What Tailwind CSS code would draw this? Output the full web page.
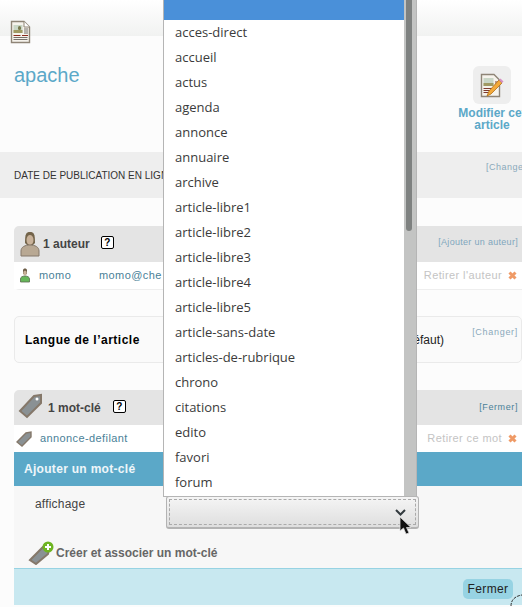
<!DOCTYPE html>
<html lang="en">
<head>
    <meta charset="UTF-8">
    <title>apache</title>
    <script src="https://cdn.jsdelivr.net/npm/@tailwindcss/browser@4"></script>
</head>
<body class="relative w-[522px] h-[607px] overflow-hidden bg-[#fcfcfc] font-['Liberation_Sans',sans-serif]">

    <!-- Top strip -->
    <div class="relative h-9 bg-gradient-to-b from-white to-[#f1f2f1]">
        <svg class="absolute left-[10px] top-[20px]" width="21" height="24" viewBox="0 0 21 24">
            <path d="M1.5 1.5H14L19.5 7V22.5H1.5Z" fill="#f6f3ec" stroke="#8f8577" stroke-width="1.4"/>
            <path d="M14 1.5V7H19.5" fill="#fff" stroke="#8f8577"/>
            <rect x="3.5" y="5" width="9" height="8" fill="#c9d6c6"/>
            <rect x="3.5" y="10" width="9" height="3" fill="#a09a63"/>
            <rect x="8" y="6" width="3" height="4" rx="1.5" fill="#77784c"/>
            <path d="M14 9h4M14 11h4M14 13h4" stroke="#77706a"/>
            <path d="M3.5 15.500h7M12 15.500h6" stroke="#8c2a1c"/>
            <path d="M3.500 17.500h14M3.500 19.500h14" stroke="#77706a"/>
        </svg>
    </div>

    <!-- Title -->
    <div class="h-[116px] flex justify-between">
        <h1 class="pl-[14px] pt-[25px] text-[20px] leading-[28px] text-[#5ba8c8]">apache</h1>
        <div class="w-[70px] mr-[-5px] pt-[30px] flex flex-col items-center shrink-0">
            <div class="w-[38px] h-[38px] rounded-[6px] bg-[#eeeeee] flex items-center justify-center">
                <svg width="24" height="25" viewBox="0 0 24 25">
                    <path d="M1.500 1.500H14L19.500 7V23.500H1.500Z" fill="#f6f3ec" stroke="#8f8577" stroke-width="1.400"/>
                    <rect x="3.500" y="5" width="10" height="8" fill="#c9d6c6"/>
                    <rect x="3.500" y="10" width="10" height="3" fill="#a09a63"/>
                    <path d="M15 9h3M15 11h3M3.500 15.500h10M3.500 17.500h7M3.500 19.500h5" stroke="#7d3a2e"/>
                    <path d="M7 23 9 18 19 7l3 3-11 11Z" fill="#f3a93a" stroke="#b0701a" stroke-width=".8"/>
                    <path d="M19 7l1.500-1.500 3 3L22 10Z" fill="#d68fc4"/>
                </svg>
            </div>
            <a class="mt-[3px] text-center text-[12px] leading-[12px] font-bold text-[#5ba8c8] whitespace-nowrap">Modifier cet<br>article</a>
        </div>
    </div>

    <!-- Publication date -->
    <div class="h-[46px] bg-[#eeeeee] flex justify-between overflow-hidden">
        <span class="pl-[14px] pt-[18px] text-[10px] leading-[12px] text-[#333333] whitespace-nowrap">DATE DE PUBLICATION EN LIGNE</span>
        <a class="pt-[10px] pl-[20px] w-[56px] shrink-0 text-[9px] leading-[11px] tracking-[0.5px] text-[#8aa9bb] whitespace-nowrap overflow-hidden">[Changer]</a>
    </div>

    <!-- Authors -->
    <section class="mt-[28px] ml-[14px] h-[64px] border-b-2 border-[#eeeeee] rounded-bl-[5px]">
        <div class="h-[36px] bg-[#e4e4e4] rounded-tl-[5px] flex items-center justify-between">
            <div class="flex items-center">
                <svg class="ml-[6px]" width="20" height="26" viewBox="0 0 20 26">
                    <path d="M5 12C5 3 6 1 10 1s5 2 5 11l-2 2H7Z" fill="#73644a"/>
                    <ellipse cx="10" cy="9" rx="3.500" ry="5" fill="#c9b29a"/>
                    <path d="M1 25v-5c0-4 4-6 9-6s9 2 9 6v5Z" fill="#b8a893" stroke="#85786a"/>
                </svg>
                <span class="ml-[3px] text-[12px] font-bold text-[#444444]">1 auteur</span>
                <span class="ml-[11px] w-[13px] h-[13px] mb-[3px] border border-black rounded-[2px] bg-white text-[10px] leading-[11px] font-bold text-center text-black">?</span>
            </div>
            <a class="mr-[4px] mb-[3px] text-[9px] tracking-[0.3px] text-[#7fa6bd]">[Ajouter un auteur]</a>
        </div>
        <div class="h-[27px] bg-white flex items-center text-[11px] tracking-[0.4px]">
            <svg class="ml-[6px]" width="10" height="15" viewBox="0 0 10 15">
                <path d="M3 2.500C3 1 4 .5 5 .5s2 .5 2 2V6H3Z" fill="#6b5b45"/>
                <ellipse cx="5" cy="5" rx="1.800" ry="2.500" fill="#c9b29a"/>
                <path d="M.5 14v-3c0-2 2-3 4.500-3s4.500 1 4.500 3v3Z" fill="#66b75a" stroke="#5a6b4e" stroke-width=".8"/>
            </svg>
            <a class="ml-[9px] w-[60px] text-[#4a8198]">momo</a>
            <a class="text-[#4a8198] whitespace-nowrap">momo@che</a>
            <span class="ml-auto text-[#c4c4c4] whitespace-nowrap">Retirer l'auteur</span>
            <svg class="ml-[6px] mr-[5px]" width="9" height="9" viewBox="0 0 9 9"><path d="M1.500 1.500 7.500 7.500M7.500 1.500 1.500 7.500" stroke="#ef9a66" stroke-width="3"/></svg>
        </div>
    </section>

    <!-- Language -->
    <section class="relative mt-[26px] ml-[14px] h-[47px] border border-[#eaeaea] rounded-[5px] bg-[#fafafa] flex items-center justify-between">
        <strong class="ml-[10px] text-[12px] tracking-[0.5px] text-black">Langue de l’article</strong>
        <span class="mr-[77px] text-[12px] text-[#222222]">français (par défaut)</span>
        <a class="absolute right-[3px] top-[9px] text-[9px] tracking-[0.7px] text-[#8aa9bb]">[Changer]</a>
    </section>

    <!-- Keywords -->
    <section class="mt-[27px] ml-[14px] h-[216px]">
        <div class="h-[35px] bg-[#e4e4e4] rounded-tl-[5px] flex items-center justify-between">
            <div class="flex items-center">
                <svg class="ml-[4px] mb-[4px]" width="25" height="26" viewBox="0 0 25 26">
                    <path d="M2 18 16 3l7-1 0 8L9 24Z" fill="#8a9194" stroke="#85786a" stroke-width="2"/>
                    <circle cx="19" cy="6" r="1.500" fill="#fff"/>
                </svg>
                <span class="ml-[5px] text-[12px] font-bold text-[#444444]">1 mot-clé</span>
                <span class="ml-[12px] w-[13px] h-[13px] mb-[3px] border border-black rounded-[2px] bg-white text-[10px] leading-[11px] font-bold text-center text-black">?</span>
            </div>
            <a class="mr-[4px] text-[9px] tracking-[0.6px] text-[#4a8198]">[Fermer]</a>
        </div>
        <div class="h-[27px] bg-white flex items-center text-[11px] tracking-[0.4px]">
            <svg class="ml-[2px]" width="16" height="16" viewBox="0 0 16 16">
                <path d="M1 11 10 2l5-1v5l-9 9Z" fill="#8a9194" stroke="#85786a" stroke-width="1.400"/>
            </svg>
            <a class="ml-[8px] text-[#4a8198]">annonce-defilant</a>
            <span class="ml-auto text-[#c4c4c4] whitespace-nowrap">Retirer ce mot</span>
            <svg class="ml-[6px] mr-[5px]" width="9" height="9" viewBox="0 0 9 9"><path d="M1.500 1.500 7.500 7.500M7.500 1.500 1.500 7.500" stroke="#ef9a66" stroke-width="3"/></svg>
        </div>
        <div class="h-[34px] bg-[#5ba8c8] pl-[10px] pt-[10px] text-[12px] leading-[14px] font-bold tracking-[0.3px] text-white/90">Ajouter un mot-clé</div>
        <div class="h-[83px] bg-[#f7f7f7] border-b border-[#97d3e3]">
            <div class="h-[52px] flex items-start">
                <label class="ml-[21px] mt-[11px] w-[131px] text-[12px] leading-[14px] tracking-[0.2px] text-[#444444]">affichage</label>
                <div class="mt-[10px] w-[253px] h-[33px] p-[2px] rounded-[3px] border border-[#b3b3b3] border-b-2 bg-gradient-to-b from-[#f5f5f5] to-[#dedede]">
                    <div class="relative h-full border border-dashed border-[#aaaaaa]">
                        <svg class="absolute right-[9px] top-[9px]" width="11" height="7" viewBox="0 0 11 7"><path d="M1 1 5.500 5.500 10 1" fill="none" stroke="#333b3f" stroke-width="2"/></svg>
                    </div>
                </div>
            </div>
            <div class="flex items-center h-[30px]">
                <svg class="ml-[14px]" width="26" height="24" viewBox="0 0 26 24">
                    <path d="M2 19 15 6l6 2-1 5L8 23Z" fill="#8a9194" stroke="#85786a" stroke-width="2"/>
                    <circle cx="20" cy="6" r="5.500" fill="#6fb522"/>
                    <path d="M20 3v6M17 6h6" stroke="#fff" stroke-width="2"/>
                </svg>
                <span class="ml-[2px] text-[12px] font-bold text-[#666666]">Créer et associer un mot-clé</span>
            </div>
        </div>
        <div class="h-[36px] bg-[#c8e8f0] flex justify-end items-start">
            <button class="mt-[10px] mr-[9px] w-[50px] h-[20px] rounded-[5px] bg-[#97d3e3] text-[12px] tracking-[0.4px] text-[#222222]">Fermer</button>
        </div>
    </section>

    <!-- Open select list -->
    <div class="absolute left-[163px] top-0 w-[254px] h-[497px] border-x border-b border-[#b5b5b5] bg-white flex font-['Open_Sans',sans-serif] text-[13px] text-[#3b3b3b]">
        <ul class="flex-1 min-w-0">
            <li class="h-[20px] bg-[#4a90d9]"></li>
            <li class="h-[25px] leading-[25px] pl-[11px]">acces-direct</li>
            <li class="h-[25px] leading-[25px] pl-[11px]">accueil</li>
            <li class="h-[25px] leading-[25px] pl-[11px]">actus</li>
            <li class="h-[25px] leading-[25px] pl-[11px]">agenda</li>
            <li class="h-[25px] leading-[25px] pl-[11px]">annonce</li>
            <li class="h-[25px] leading-[25px] pl-[11px]">annuaire</li>
            <li class="h-[25px] leading-[25px] pl-[11px]">archive</li>
            <li class="h-[25px] leading-[25px] pl-[11px]">article-libre1</li>
            <li class="h-[25px] leading-[25px] pl-[11px]">article-libre2</li>
            <li class="h-[25px] leading-[25px] pl-[11px]">article-libre3</li>
            <li class="h-[25px] leading-[25px] pl-[11px]">article-libre4</li>
            <li class="h-[25px] leading-[25px] pl-[11px]">article-libre5</li>
            <li class="h-[25px] leading-[25px] pl-[11px]">article-sans-date</li>
            <li class="h-[25px] leading-[25px] pl-[11px]">articles-de-rubrique</li>
            <li class="h-[25px] leading-[25px] pl-[11px]">chrono</li>
            <li class="h-[25px] leading-[25px] pl-[11px]">citations</li>
            <li class="h-[25px] leading-[25px] pl-[11px]">edito</li>
            <li class="h-[25px] leading-[25px] pl-[11px]">favori</li>
            <li class="h-[25px] leading-[25px] pl-[11px]">forum</li>
        </ul>
        <div class="w-[12px] bg-[#c3c4c3] px-[2px] shrink-0">
            <div class="h-[231px] w-[6px] rounded-b-[3px] bg-[#7e8180]"></div>
        </div>
    </div>

    <!-- Mouse cursor -->
    <svg class="absolute left-[399px] top-[516px]" width="13" height="20" viewBox="0 0 13 20">
        <path d="M1 1V15L4.500 12 7 18 10 17 7.500 11.500H12Z" fill="#111" stroke="#ddd" stroke-width=".8"/>
    </svg>
    <!-- Loader arc at the corner -->
    <svg class="absolute left-[510px] top-[594px]" width="12" height="13" viewBox="0 0 12 13">
        <path d="M1 12C1 6 5 2 12 1" fill="none" stroke="#333" stroke-dasharray="3 1"/>
    </svg>
</body>
</html>
